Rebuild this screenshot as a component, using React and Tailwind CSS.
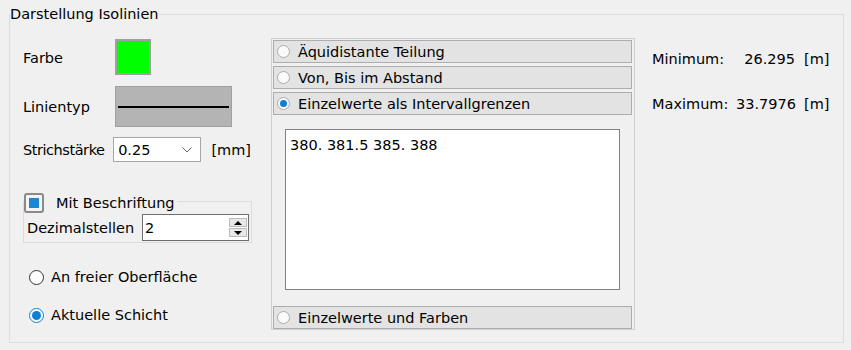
import React from 'react'

function Radio({ checked, small }) {
  if (small) {
    return (
      <span className="w-[13px] h-[13px] rounded-full border border-[#ababab] bg-[#fafafa] flex items-center justify-center shrink-0">
        {checked && <span className="w-[7px] h-[7px] rounded-full bg-[#0f7fd6]" />}
      </span>
    )
  }
  return (
    <span className={`w-[15px] h-[15px] rounded-full border bg-white flex items-center justify-center shrink-0 ${checked ? 'border-[#0f7fd6]' : 'border-[#333333]'}`}>
      {checked && <span className="w-[9px] h-[9px] rounded-full bg-[#0f7fd6]" />}
    </span>
  )
}

function OptionRow({ label, checked }) {
  return (
    <div className="h-[23px] border border-[#adadad] bg-[#e3e3e3] flex items-center pl-[3px]">
      <Radio small checked={checked} />
      <span className="ml-[8px]">{label}</span>
    </div>
  )
}

function LeftColumn() {
  return (
    <div className="w-[228px] flex flex-col">
      <div className="flex items-center h-[36px] mt-[1px]">
        <span className="w-[92px] pt-[2px]">Farbe</span>
        <div className="w-[36px] h-[36px] bg-[#00ff00] border-2 border-[#a0a0a0]" />
      </div>
      <div className="flex items-center h-[41px] mt-[11px]">
        <span className="w-[92px] pt-[1px]">Linientyp</span>
        <div className="w-[117px] h-[41px] bg-[#b4b4b4] border border-[#a0a0a0] flex items-center px-[2px]">
          <div className="w-full h-[2px] bg-black" />
        </div>
      </div>
      <div className="flex items-center h-[25px] mt-[10px]">
        <span className="w-[91px] tracking-[-0.45px]">Strichstärke</span>
        <div className="w-[89px] h-[25px] bg-white border border-[#a6a6a6] flex items-center pl-[4px] pr-[8px]">
          <span className="flex-1">0.25</span>
          <svg width="10" height="6" viewBox="0 0 10 6" className="text-[#666666]">
            <polyline points="0.5,0.5 5,5 9.5,0.5" fill="none" stroke="currentColor" strokeWidth="1" />
          </svg>
        </div>
        <span className="ml-[10px]">[mm]</span>
      </div>

      <fieldset className="mt-[31px] w-[229px] border border-[#dcdcdc]">
        <legend className="h-[16px] pr-[2px]">
          <div className="flex items-start">
            <span className="w-[20px] h-[20px] rounded-[3px] border-2 border-[#8a8a8a] bg-[#f4f4f4] flex items-center justify-center">
              <span className="w-[10px] h-[10px] bg-[#1a86d6]" />
            </span>
            <span className="ml-[12px] mt-[1px]">Mit Beschriftung</span>
          </div>
        </legend>
        <div className="flex items-center pl-[3px] pt-[5px] pb-[1px]">
          <span className="w-[115px] pt-[1px]">Dezimalstellen</span>
          <div className="w-[107px] h-[27px] bg-white border border-[#6e6e6e] flex items-center pl-[2px] pr-[1px]">
            <span className="flex-1">2</span>
            <div className="flex flex-col gap-[1px]">
              <div className="w-[18px] h-[9px] bg-[#e8e8e8] border border-[#bcbcbc] flex items-center justify-center">
                <svg width="8" height="4" viewBox="0 0 8 4"><polygon points="0,4 8,4 4,0" fill="#000" /></svg>
              </div>
              <div className="w-[18px] h-[9px] bg-[#e8e8e8] border border-[#bcbcbc] flex items-center justify-center">
                <svg width="8" height="4" viewBox="0 0 8 4"><polygon points="0,0 8,0 4,4" fill="#000" /></svg>
              </div>
            </div>
          </div>
        </div>
      </fieldset>

      <div className="flex items-center h-[18px] mt-[25px] pl-[6px]">
        <Radio />
        <span className="ml-[7px]">An freier Oberfläche</span>
      </div>
      <div className="flex items-center h-[18px] mt-[20px] pl-[6px]">
        <Radio checked />
        <span className="ml-[7px]">Aktuelle Schicht</span>
      </div>
    </div>
  )
}

function MiddlePanel() {
  return (
    <div className="ml-[20px] w-[364px] h-[292px] border border-[#cfcfcf] pt-[1px] pl-[1px] pr-[2px] flex flex-col">
      <OptionRow label="Äquidistante Teilung" />
      <div className="mt-[3px]"><OptionRow label="Von, Bis im Abstand" /></div>
      <div className="mt-[3px]"><OptionRow label="Einzelwerte als Intervallgrenzen" checked /></div>
      <div className="mt-[14px] ml-[12px] w-[335px] h-[161px] bg-white border border-[#828282] pl-[4px] pt-[6px]">
        380. 381.5 385. 388
      </div>
      <div className="mt-[16px]"><OptionRow label="Einzelwerte und Farben" /></div>
    </div>
  )
}

function RightColumn() {
  return (
    <div className="ml-[17px] mt-[12px] grid grid-cols-[84px_59px_auto] gap-y-[27px] h-fit">
      <span>Minimum:</span>
      <span className="text-right">26.295</span>
      <span className="pl-[9px]">[m]</span>
      <span>Maximum:</span>
      <span className="text-right">33.7976</span>
      <span className="pl-[9px]">[m]</span>
    </div>
  )
}

export default function App() {
  return (
    <div className="w-[851px] h-[350px] bg-[#f0f0f0] text-black font-['DejaVu_Sans',sans-serif] text-[14.5px] leading-[18px] overflow-hidden pt-[5px]">
      <fieldset className="ml-[9px] w-[835px] h-[338px] border border-[#dcdcdc]">
        <legend className="ml-0 px-0">Darstellung Isolinien</legend>
        <div className="flex pl-[13px] pt-[15px]">
          <LeftColumn />
          <MiddlePanel />
          <RightColumn />
        </div>
      </fieldset>
    </div>
  )
}
